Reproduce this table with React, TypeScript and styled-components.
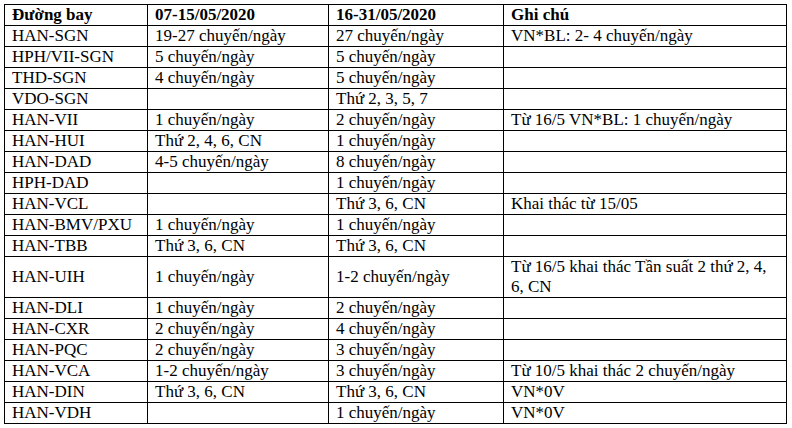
import React from "react"
import styled, { createGlobalStyle } from "styled-components"

const GlobalStyle = createGlobalStyle`
  html, body {
    margin: 0;
    padding: 0;
    background: #ffffff;
  }
`

const Page = styled.div`
  width: 792px;
  height: 428px;
  padding: 4px 0 0 4px;
  box-sizing: border-box;
  background: #ffffff;
  font-family: "Liberation Serif", "Times New Roman", serif;
  color: #000000;
`

const Table = styled.table`
  border-collapse: collapse;
  table-layout: fixed;
  width: 782px;
  font-size: 17px;
  line-height: 20px;
`

const Col = styled.col<{ w: number }>`
  width: ${({ w }) => `${w}px`};
`

const HeadCell = styled.th`
  border: 1px solid #000000;
  padding: 0 7px;
  text-align: left;
  font-weight: 700;
  vertical-align: middle;
  height: 20px;
  white-space: nowrap;
`

const Cell = styled.td`
  border: 1px solid #000000;
  padding: 0 7px;
  text-align: left;
  vertical-align: middle;
  height: 20px;
`

// precomposed Vietnamese letters written as escapes
const e = "chuy\u1EBFn/ng\u00E0y"
const thu = "Th\u1EE9"
const tu = "T\u1EEB"

const headers = ["\u0110\u01B0\u1EDDng bay", "07-15/05/2020", "16-31/05/2020", "Ghi ch\u00FA"]

const rows: string[][] = [
  ["HAN-SGN", `19-27 ${e}`, `27 ${e}`, `VN*BL: 2- 4 ${e}`],
  ["HPH/VII-SGN", `5 ${e}`, `5 ${e}`, ""],
  ["THD-SGN", `4 ${e}`, `5 ${e}`, ""],
  ["VDO-SGN", "", `${thu} 2, 3, 5, 7`, ""],
  ["HAN-VII", `1 ${e}`, `2 ${e}`, `${tu} 16/5 VN*BL: 1 ${e}`],
  ["HAN-HUI", `${thu} 2, 4, 6, CN`, `1 ${e}`, ""],
  ["HAN-DAD", `4-5 ${e}`, `8 ${e}`, ""],
  ["HPH-DAD", "", `1 ${e}`, ""],
  ["HAN-VCL", "", `${thu} 3, 6, CN`, "Khai th\u00E1c t\u1EEB 15/05"],
  ["HAN-BMV/PXU", `1 ${e}`, `1 ${e}`, ""],
  ["HAN-TBB", `${thu} 3, 6, CN`, `${thu} 3, 6, CN`, ""],
  [
    "HAN-UIH",
    `1 ${e}`,
    `1-2 ${e}`,
    `${tu} 16/5 khai th\u00E1c T\u1EA7n su\u1EA5t 2 th\u1EE9 2, 4, 6, CN`,
  ],
  ["HAN-DLI", `1 ${e}`, `2 ${e}`, ""],
  ["HAN-CXR", `2 ${e}`, `4 ${e}`, ""],
  ["HAN-PQC", `2 ${e}`, `3 ${e}`, ""],
  ["HAN-VCA", `1-2 ${e}`, `3 ${e}`, `${tu} 10/5 khai th\u00E1c 2 ${e}`],
  ["HAN-DIN", `${thu} 3, 6, CN`, `${thu} 3, 6, CN`, "VN*0V"],
  ["HAN-VDH", "", `1 ${e}`, "VN*0V"],
]

const widths = [143, 181, 175, 283]

export default function App() {
  return (
    <Page>
      <GlobalStyle />
      <Table>
        <colgroup>
          {widths.map((w, i) => (
            <Col key={i} w={w} />
          ))}
        </colgroup>
        <thead>
          <tr>
            {headers.map((h) => (
              <HeadCell key={h}>{h}</HeadCell>
            ))}
          </tr>
        </thead>
        <tbody>
          {rows.map((r) => (
            <tr key={r[0]}>
              {r.map((c, i) => (
                <Cell key={i}>{c}</Cell>
              ))}
            </tr>
          ))}
        </tbody>
      </Table>
    </Page>
  )
}
